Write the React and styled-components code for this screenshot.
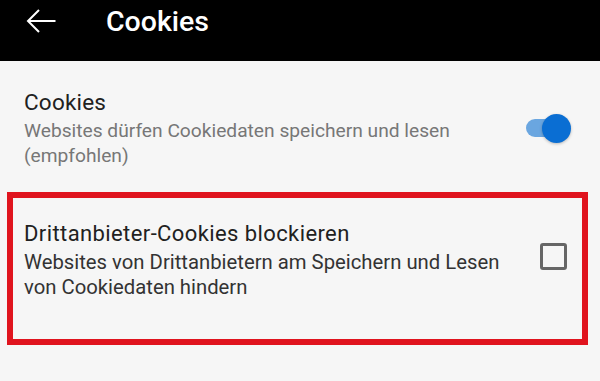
import React from "react";
import styled, { createGlobalStyle } from "styled-components";

const GlobalStyle = createGlobalStyle`
  html, body {
    margin: 0;
    padding: 0;
    background: #f6f6f6;
    font-family: Roboto, "Noto Sans", "Liberation Sans", sans-serif;
  }
`;

const Page = styled.div`
  width: 600px;
  height: 381px;
  overflow: hidden;
  background: #f6f6f6;
`;

const TopBar = styled.div`
  height: 61px;
  background: #000;
  display: flex;
  align-items: flex-start;
  padding-top: 4px;
  box-sizing: border-box;
`;

const BackButton = styled.div`
  width: 80px;
  height: 34px;
  display: flex;
  align-items: center;
  padding-left: 26px;
  box-sizing: border-box;
`;

const Title = styled.div`
  margin-left: 26px;
  color: #fff;
  font-size: 28.5px;
  font-weight: 500;
  line-height: 36px;
`;

const SettingRow = styled.div`
  display: flex;
  align-items: center;
  justify-content: space-between;
  padding: 27px 29px 0 24px;
`;

const MarkedRow = styled.div`
  display: flex;
  align-items: center;
  justify-content: space-between;
  margin: 24px 12px 0 7px;
  padding: 22px 15px 39px 11px;
  border: 6px solid #e0141e;
`;

const TextCol = styled.div`
  display: flex;
  flex-direction: column;
`;

const RowTitle = styled.div`
  font-size: ${(p) => (p.$wide ? "22px" : "22.5px")};
  letter-spacing: ${(p) => (p.$wide ? "0.4px" : "0.2px")};
  color: #212121;
  line-height: 28px;
  margin-bottom: 2px;
`;

const RowSub = styled.div`
  font-size: ${(p) => (p.$dark ? "20.3px" : "19.2px")};
  line-height: 25px;
  color: ${(p) => (p.$dark ? "#333" : "#777")};
`;

const Toggle = styled.div`
  position: relative;
  width: 45px;
  height: 29px;
  flex-shrink: 0;
`;

const Track = styled.div`
  position: absolute;
  left: 0;
  top: 5px;
  width: 38px;
  height: 18px;
  border-radius: 9px;
  background: #6aa6e0;
`;

const Thumb = styled.div`
  position: absolute;
  right: 0;
  top: 0;
  width: 29px;
  height: 29px;
  border-radius: 50%;
  background: #0a6ed3;
  box-shadow: 0 1px 3px rgba(0, 0, 0, 0.25);
`;

const Checkbox = styled.div`
  width: 27px;
  height: 27px;
  box-sizing: border-box;
  border: 3px solid #666;
  border-radius: 3px;
  flex-shrink: 0;
  margin-top: -7px;
`;

export default function App() {
  return (
    <Page>
      <GlobalStyle />
      <TopBar>
        <BackButton>
          <svg width="30" height="26" viewBox="0 0 30 26" fill="none">
            <path d="M29.5 13H2M13 2L2 13l11 11" stroke="#fff" strokeWidth="2" />
          </svg>
        </BackButton>
        <Title>Cookies</Title>
      </TopBar>
      <SettingRow>
        <TextCol>
          <RowTitle>Cookies</RowTitle>
          <RowSub>
            Websites dürfen Cookiedaten speichern und lesen
            <br />
            (empfohlen)
          </RowSub>
        </TextCol>
        <Toggle>
          <Track />
          <Thumb />
        </Toggle>
      </SettingRow>
      <MarkedRow>
        <TextCol>
          <RowTitle $wide>Drittanbieter-Cookies blockieren</RowTitle>
          <RowSub $dark>
            Websites von Drittanbietern am Speichern und Lesen
            <br />
            von Cookiedaten hindern
          </RowSub>
        </TextCol>
        <Checkbox />
      </MarkedRow>
    </Page>
  );
}
